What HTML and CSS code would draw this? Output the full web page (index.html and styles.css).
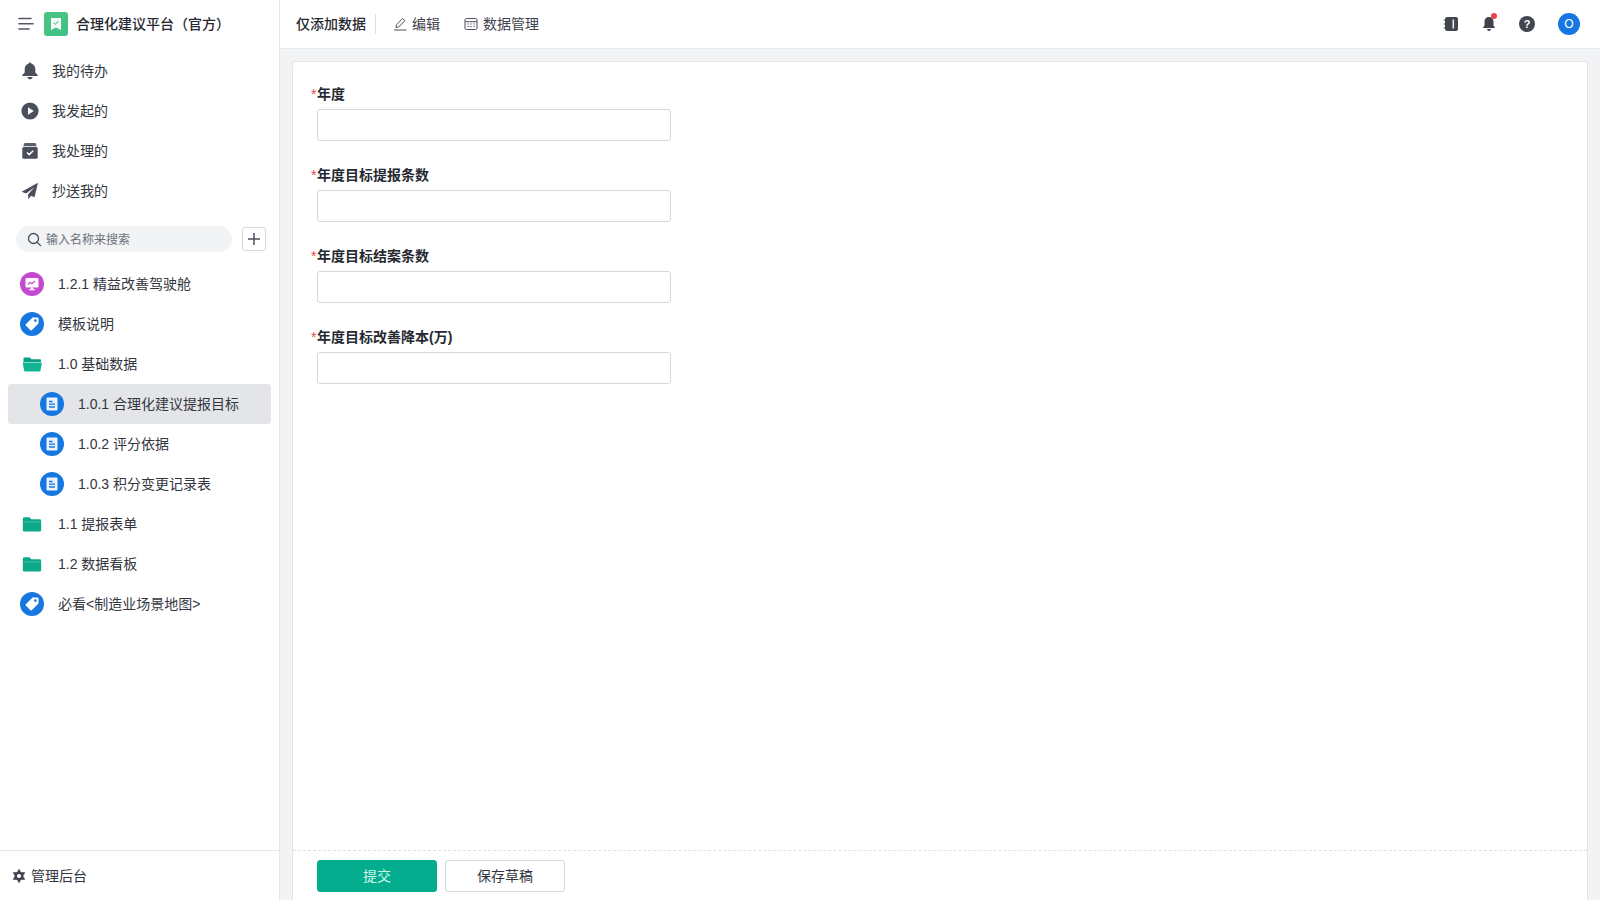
FILE: index.html
```
<!DOCTYPE html>
<html lang="zh-CN">
<head>
<meta charset="utf-8">
<title>合理化建议平台（官方）</title>
<link rel="stylesheet" href="styles.css">
</head>
<body>
<div class="app">
  <aside class="sidebar">
    <div class="brand">
      <svg class="menu-ico" width="16" height="14" viewBox="0 0 16 14"><path d="M1 1.500h12M1 6.800h14M1 12h10" stroke="#555864" stroke-width="1.600" stroke-linecap="round" fill="none"/></svg>
      <svg class="logo" width="24" height="24" viewBox="0 0 24 24"><defs><linearGradient id="lg" x1="0" y1="0" x2="1" y2="1"><stop offset="0" stop-color="#4fc27f"/><stop offset="1" stop-color="#3cc28a"/></linearGradient></defs><rect width="24" height="24" rx="3" fill="url(#lg)"/><path d="M7 6h10v12l-5-2.400L7 18z" fill="#f4fbf7"/><path d="M9.500 10.600l1.800 1.700 3.200-3.200" stroke="#5ec98d" stroke-width="1.100" fill="none"/></svg>
      <span class="brand-name">合理化建议平台（官方）</span>
    </div>
    <nav class="quick">
      <a class="quick-item">
        <svg width="18" height="18" viewBox="0 0 18 18"><path d="M9 .4c.8 0 1.400.6 1.500 1.400 2.500.7 3.800 2.700 3.800 5.300v3.300l2.400 2.600v1H1.300v-1l2.400-2.600V7.100c0-2.600 1.300-4.600 3.800-5.300C7.600 1 8.200.4 9 .4z" fill="#4b4f5c"/><path d="M6.300 15.100h5.400c-.3 1.300-1.400 2.300-2.700 2.300s-2.400-1-2.700-2.300z" fill="#4b4f5c"/></svg>
        <span>我的待办</span></a>
      <a class="quick-item">
        <svg width="18" height="18" viewBox="0 0 18 18"><circle cx="9" cy="9" r="8.600" fill="#4b4f5c"/><path d="M7 5.200l5.800 3.800L7 12.800z" fill="#fff"/></svg>
        <span>我发起的</span></a>
      <a class="quick-item">
        <svg width="18" height="18" viewBox="0 0 18 18"><path d="M3.500 1h11l1.200 3.200H2.300z" fill="#5c5f6b"/><rect x="1.300" y="5" width="15.400" height="11.800" rx="1.500" fill="#4b4f5c"/><path d="M6 10.500l2.200 2.100L12.200 8.800" stroke="#fff" stroke-width="1.500" fill="none"/></svg>
        <span>我处理的</span></a>
      <a class="quick-item">
        <svg width="18" height="18" viewBox="0 0 18 18"><path d="M17 .8L.6 9.700l4.500 1.700 8.300-6.200-6.400 7.300.5 4.900 2.400-3.600 3.600 1.400z" fill="#4b4f5c"/></svg>
        <span>抄送我的</span></a>
    </nav>
    <div class="search-row">
      <div class="search">
        <svg width="15" height="15" viewBox="0 0 15 15"><circle cx="6.500" cy="6.500" r="5" stroke="#4b4f5c" stroke-width="1.300" fill="none"/><path d="M10.200 10.200l3.400 3.400" stroke="#4b4f5c" stroke-width="1.300" stroke-linecap="round"/></svg>
        <span>输入名称来搜索</span>
      </div>
      <button class="add" type="button"><svg width="14" height="14" viewBox="0 0 14 14"><path d="M7 1v12M1 7h12" stroke="#4b4f5c" stroke-width="1.500"/></svg></button>
    </div>
    <ul class="tree">
      <li class="row">
        <svg width="24" height="24" viewBox="0 0 24 24"><circle cx="12" cy="12" r="12" fill="#c649d1"/><rect x="5.500" y="6" width="13" height="9.500" rx="1" fill="#fff"/><path d="M7.800 12.500l2.300-2 1.800 1.200 3-2.700" stroke="#c649d1" stroke-width="1.100" fill="none"/><path d="M10.800 15.500h2.400v1.700h2v1.100H8.800v-1.100h2z" fill="#fff"/></svg>
        <span>1.2.1 精益改善驾驶舱</span></li>
      <li class="row">
        <svg width="24" height="24" viewBox="0 0 24 24"><circle cx="12" cy="12" r="12" fill="#1677e0"/><path d="M12.500 5.500h5c.6 0 1 .4 1 1v5l-6.700 6.700c-.4.400-1 .4-1.400 0l-4.600-4.600c-.4-.4-.4-1 0-1.400z" fill="#fff"/><circle cx="15.400" cy="8.600" r="1.300" fill="#1677e0"/></svg>
        <span>模板说明</span></li>
      <li class="row">
        <svg width="24" height="24" viewBox="0 0 24 24"><path d="M3.500 6.500c0-.6.400-1 1-1h5.300l1.800 1.800h8.400c.5 0 .9.400.9 1v1.700H3.500z" fill="#0b9f84"/><path d="M2.600 10.500h19.300l-1.400 8c-.1.600-.5 1-1.100 1H5.200c-.6 0-1-.4-1.100-1z" fill="#14b596"/></svg>
        <span>1.0 基础数据</span></li>
      <li class="row child active">
        <svg width="24" height="24" viewBox="0 0 24 24"><circle cx="12" cy="12" r="12" fill="#1677e0"/><path d="M6.500 6.500c0-.6.400-1 1-1h9c.6 0 1 .4 1 1v11c0 .6-.4 1-1 1h-9c-.6 0-1-.4-1-1z" fill="#e9f2fd"/><path d="M9 9.500h3.500M9 12.200h6M9 15h6" stroke="#1677e0" stroke-width="1.300"/></svg>
        <span>1.0.1 合理化建议提报目标</span></li>
      <li class="row child">
        <svg width="24" height="24" viewBox="0 0 24 24"><circle cx="12" cy="12" r="12" fill="#1677e0"/><path d="M6.500 6.500c0-.6.400-1 1-1h9c.6 0 1 .4 1 1v11c0 .6-.4 1-1 1h-9c-.6 0-1-.4-1-1z" fill="#e9f2fd"/><path d="M9 9.500h3.500M9 12.200h6M9 15h6" stroke="#1677e0" stroke-width="1.300"/></svg>
        <span>1.0.2 评分依据</span></li>
      <li class="row child">
        <svg width="24" height="24" viewBox="0 0 24 24"><circle cx="12" cy="12" r="12" fill="#1677e0"/><path d="M6.500 6.500c0-.6.400-1 1-1h9c.6 0 1 .4 1 1v11c0 .6-.4 1-1 1h-9c-.6 0-1-.4-1-1z" fill="#e9f2fd"/><path d="M9 9.500h3.500M9 12.200h6M9 15h6" stroke="#1677e0" stroke-width="1.300"/></svg>
        <span>1.0.3 积分变更记录表</span></li>
      <li class="row">
        <svg width="24" height="24" viewBox="0 0 24 24"><path d="M2.800 6.800c0-.9.600-1.500 1.500-1.500h5.200l1.800 1.900h8.400c.9 0 1.500.6 1.500 1.500v9.300c0 .9-.6 1.500-1.500 1.500H4.300c-.9 0-1.500-.6-1.500-1.500z" fill="#0ea98c"/><path d="M2.800 10h18.400" stroke="#fff" stroke-width=".5" opacity=".5"/></svg>
        <span>1.1 提报表单</span></li>
      <li class="row">
        <svg width="24" height="24" viewBox="0 0 24 24"><path d="M2.800 6.800c0-.9.600-1.500 1.500-1.500h5.200l1.800 1.900h8.400c.9 0 1.500.6 1.500 1.500v9.300c0 .9-.6 1.500-1.500 1.500H4.300c-.9 0-1.500-.6-1.500-1.500z" fill="#0ea98c"/><path d="M2.800 10h18.400" stroke="#fff" stroke-width=".5" opacity=".5"/></svg>
        <span>1.2 数据看板</span></li>
      <li class="row">
        <svg width="24" height="24" viewBox="0 0 24 24"><circle cx="12" cy="12" r="12" fill="#1677e0"/><path d="M12.500 5.500h5c.6 0 1 .4 1 1v5l-6.700 6.700c-.4.400-1 .4-1.400 0l-4.600-4.600c-.4-.4-.4-1 0-1.400z" fill="#fff"/><circle cx="15.400" cy="8.600" r="1.300" fill="#1677e0"/></svg>
        <span>必看&lt;制造业场景地图&gt;</span></li>
    </ul>
    <div class="admin">
      <svg width="14" height="14" viewBox="0 0 14 14"><path d="M7 .3l5.800 10.100H1.200zM7 13.700L1.200 3.600h11.600z" fill="#3f424d" stroke="#3f424d" stroke-width=".6" stroke-linejoin="round"/><circle cx="7" cy="7" r="2.100" fill="#fff"/></svg>
      <span>管理后台</span>
    </div>
  </aside>
  <main class="main">
    <header class="topbar">
      <strong class="page-name">仅添加数据</strong>
      <i class="sep"></i>
      <a class="tool">
        <svg width="14" height="14" viewBox="0 0 14 14"><path d="M1 13h12.500M3 10.500l.5-2.700L9.600 1.500l2.300 2.300L5.700 10z" stroke="#4b4f5c" stroke-width="1" fill="none"/></svg>
        <span>编辑</span></a>
      <a class="tool tool-data">
        <svg width="14" height="14" viewBox="0 0 14 14"><rect x="1" y="1.500" width="12" height="11" rx="1.500" stroke="#4b4f5c" stroke-width="1" fill="none"/><path d="M1 4.700h12M3.500 7h1.300M6.400 7h1.300M9.300 7h1.300M3.500 9.500h1.300M6.400 9.500h1.300M9.300 9.500h1.300" stroke="#4b4f5c" stroke-width="1"/></svg>
        <span>数据管理</span></a>
      <div class="top-right">
        <svg width="16" height="16" viewBox="0 0 16 16"><rect x="2" y="1" width="13" height="14" rx="2" fill="#43464f"/><path d="M.8 4h2.400M.8 8h2.400M.8 12h2.400" stroke="#43464f" stroke-width="1.200"/><rect x="9.500" y="3.500" width="1.600" height="9" fill="#e8e9eb"/></svg>
        <span class="bell">
          <svg width="16" height="16" viewBox="0 0 16 16"><path d="M8 1c2.800 0 4.500 2 4.500 4.600v4l1.700 2.400H1.800l1.700-2.400v-4C3.500 3 5.200 1 8 1z" fill="#3f424d"/><path d="M6 13h4c-.2 1.200-1 2-2 2s-1.800-.8-2-2z" fill="#3f424d"/></svg>
          <i class="dot"></i>
        </span>
        <svg width="16" height="16" viewBox="0 0 16 16"><circle cx="8" cy="8" r="8" fill="#43464f"/><text x="8" y="12" text-anchor="middle" class="help">?</text></svg>
        <span class="avatar">O</span>
      </div>
    </header>
    <section class="card">
      <form class="form">
        <div class="field"><label><em>*</em>年度</label><div class="input"></div></div>
        <div class="field"><label><em>*</em>年度目标提报条数</label><div class="input"></div></div>
        <div class="field"><label><em>*</em>年度目标结案条数</label><div class="input"></div></div>
        <div class="field"><label><em>*</em>年度目标改善降本(万)</label><div class="input"></div></div>
      </form>
      <div class="actions">
        <button class="btn primary" type="button">提交</button>
        <button class="btn" type="button">保存草稿</button>
      </div>
    </section>
  </main>
</div>
</body>
</html>
```
FILE: styles.css
```
* { box-sizing: border-box; }
html, body { margin: 0; height: 100%; }
body { font-family: "Liberation Sans", "Noto Sans CJK SC", sans-serif; font-size: 14px; color: #2f323b; background: #fff; overflow: hidden; }
ul { list-style: none; margin: 0; padding: 0; }
svg { display: block; flex: none; }
.app { display: flex; height: 900px; }
.sidebar { width: 280px; flex: none; border-right: 1px solid #e4e6e9; display: flex; flex-direction: column; background: #fff; }
.brand { height: 48px; display: flex; align-items: center; padding-left: 18px; }
.logo { margin-left: 10px; }
.brand-name { margin: 0 0 2px 8px; font-weight: 500; color: #262931; }
.quick { padding-top: 3px; }
.quick-item { height: 40px; display: flex; align-items: center; gap: 13px; padding-left: 21px; color: #33363f; }
.quick-item span, .row span, .admin span, .tool span, .search span { margin-bottom: 2px; }
.search-row { display: flex; align-items: center; margin-top: 15px; padding-left: 16px; gap: 10px; }
.search { width: 216px; height: 26px; border-radius: 13px; background: #f1f3f5; display: flex; align-items: center; gap: 4px; padding-left: 11px; font-size: 12px; color: #6d707a; }
.add { width: 24px; height: 24px; padding: 0; border: 1px solid #d5d7db; border-radius: 3px; background: #fff; display: flex; align-items: center; justify-content: center; }
.tree { padding-top: 12px; flex: 1; }
.row { height: 40px; margin: 0 8px; border-radius: 4px; display: flex; align-items: center; gap: 14px; padding-left: 12px; color: #33363f; }
.row.child { padding-left: 32px; }
.row.active { background: #e3e5e8; }
.admin { height: 50px; border-top: 1px solid #e4e6e9; display: flex; align-items: center; gap: 5px; padding-left: 12px; color: #33363f; }
.main { flex: 1; min-width: 0; display: flex; flex-direction: column; background: #f1f3f5; }
.topbar { height: 49px; flex: none; background: #fff; border-bottom: 1px solid #e6e8eb; display: flex; align-items: center; padding-left: 16px; }
.page-name { font-weight: 500; color: #262931; margin-bottom: 2px; }
.sep { width: 1px; height: 20px; background: #dcdee1; margin: 0 17px 0 9px; }
.tool { display: flex; align-items: center; gap: 5px; color: #3f424d; }
.tool-data { margin-left: 24px; }
.top-right { margin-left: auto; display: flex; align-items: center; gap: 22px; padding-right: 20px; }
.bell { position: relative; display: block; }
.dot { position: absolute; top: -3px; right: 0; width: 6px; height: 6px; border-radius: 50%; background: #ee3f4d; }
.help { fill: #fff; font-size: 11px; font-weight: 700; }
.avatar { width: 22px; height: 22px; margin-left: 1px; border-radius: 50%; background: #1677e0; color: #fff; font-size: 12px; display: flex; align-items: center; justify-content: center; }
.card { flex: 1; min-height: 0; margin: 12px 12px 0 12px; background: #fff; border: 1px solid #e2e4e8; border-bottom: 0; border-radius: 4px 4px 0 0; display: flex; flex-direction: column; }
.form { flex: 1; padding: 21px 0 0 24px; }
.field { margin-bottom: 23px; }
.field label { display: block; height: 22px; line-height: 22px; font-weight: 700; color: #262931; margin-bottom: 4px; }
.field em { display: inline-block; width: 6px; margin-left: -6px; font-style: normal; font-weight: 400; color: #e5484d; }
.input { width: 354px; height: 32px; border: 1px solid #d5d7db; border-radius: 3px; background: #fff; }
.actions { height: 50px; flex: none; border-top: 1px dashed #dfe1e4; display: flex; align-items: center; gap: 8px; padding: 0 0 0 24px; }
.btn { width: 120px; height: 32px; padding: 0 0 2px; border: 1px solid #d5d7db; border-radius: 3px; background: #fff; color: #33363f; font: inherit; }
.btn.primary { background: #05ad8f; border-color: #05ad8f; color: #cdf5ea; }
```
